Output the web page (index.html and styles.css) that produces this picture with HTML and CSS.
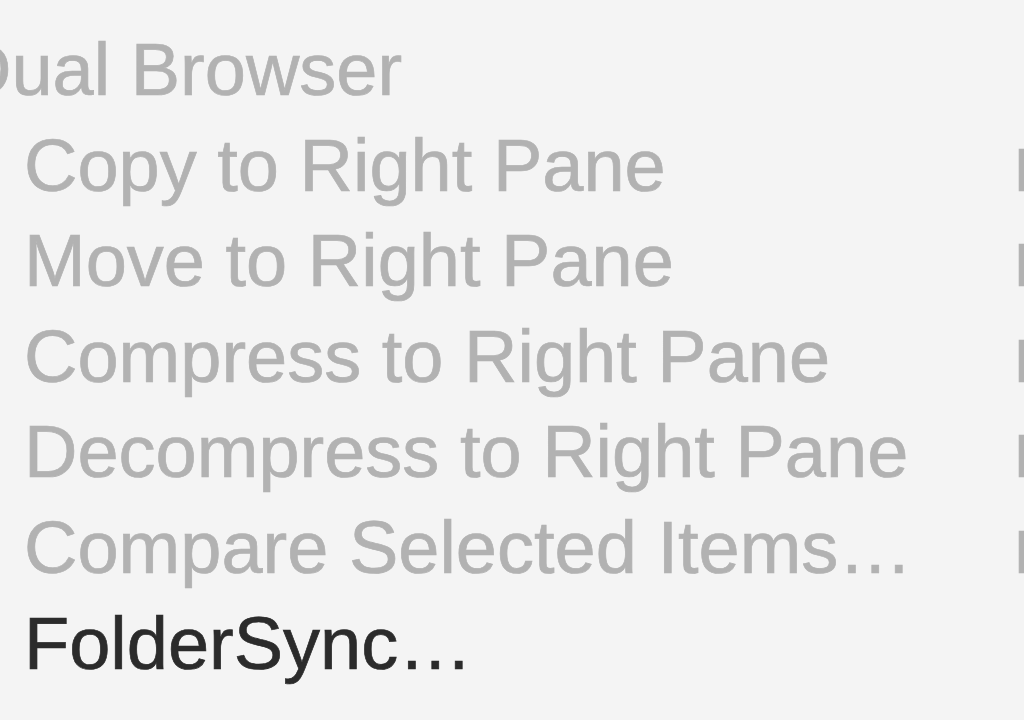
FILE: index.html
```html
<!DOCTYPE html>
<html>
<head>
<meta charset="utf-8">
<link rel="stylesheet" href="styles.css">
</head>
<body>
<div class="menu">
  <div class="header">Dual Browser</div>
  <div class="item disabled"><span class="label">Copy to Right Pane</span><span class="key">F5</span></div>
  <div class="item disabled"><span class="label">Move to Right Pane</span><span class="key">F6</span></div>
  <div class="item disabled"><span class="label">Compress to Right Pane</span><span class="key">F7</span></div>
  <div class="item disabled"><span class="label">Decompress to Right Pane</span><span class="key">F8</span></div>
  <div class="item disabled"><span class="label">Compare Selected Items…</span><span class="key">F9</span></div>
  <div class="item"><span class="label">FolderSync…</span></div>
</div>
</body>
</html>
```
FILE: styles.css
```css
html, body {
  margin: 0;
  padding: 0;
  width: 1024px;
  height: 720px;
  overflow: hidden;
  background: #f4f4f4;
}
.menu {
  font-family: "Liberation Sans", Arial, sans-serif;
  font-size: 74px;
  line-height: 95.6px;
  padding-top: 22px;
  width: 1200px;
  color: #2b2b2b;
  white-space: nowrap;
  -webkit-text-stroke: 0.7px currentColor;
}
.header {
  margin-left: -42px;
  height: 95.6px;
  color: #b2b2b2;
}
.item {
  display: block;
  height: 95.6px;
  padding-left: 24px;
}
.item.disabled {
  color: #b2b2b2;
}
.label {
  display: inline-block;
  width: 990px;
}
.key {
  font-size: 62px;
  line-height: 0;
}
```
